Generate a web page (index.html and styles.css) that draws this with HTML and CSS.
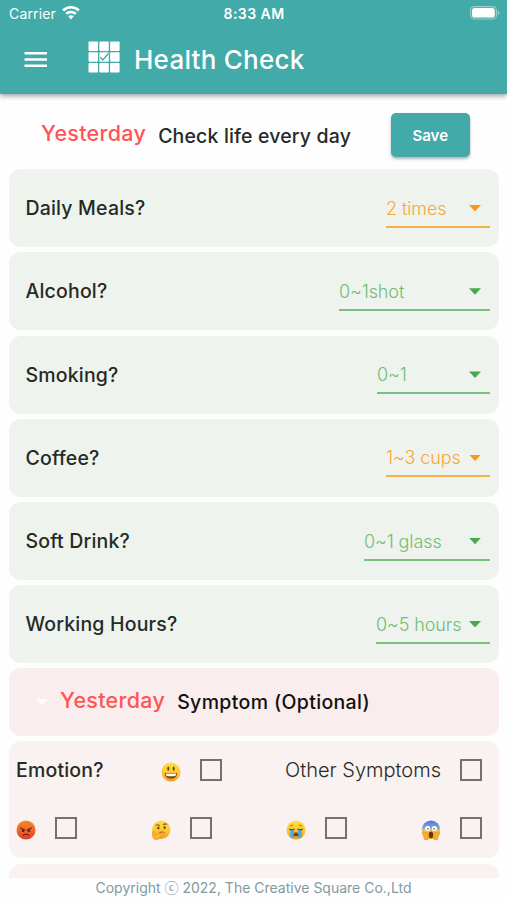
FILE: index.html
```html
<!DOCTYPE html>
<html lang="en">
<head>
<meta charset="utf-8">
<title>Health Check</title>
<link rel="stylesheet" href="styles.css">
</head>
<body>
<svg width="0" height="0" class="defs" aria-hidden="true">
  <defs>
    <linearGradient id="yellow" x1="0" y1="0" x2="0" y2="1"><stop offset="0" stop-color="#ffdf45"/><stop offset=".6" stop-color="#fcc32f"/><stop offset="1" stop-color="#f09a20"/></linearGradient>
    <linearGradient id="red" x1="0" y1="0" x2="0" y2="1"><stop offset="0" stop-color="#f68a25"/><stop offset=".55" stop-color="#ee6427"/><stop offset="1" stop-color="#dd3b28"/></linearGradient>
    <linearGradient id="scared" x1="0" y1="0" x2="0" y2="1"><stop offset="0" stop-color="#4c78d8"/><stop offset=".4" stop-color="#86a5dc"/><stop offset=".55" stop-color="#f6c649"/><stop offset="1" stop-color="#f3a51f"/></linearGradient>
  </defs>
</svg>
<div class="app">
  <header class="header">
    <div class="status">
      <div class="carrier"><span class="carrier-name">Carrier</span>
        <svg class="wifi" viewBox="0 0 18 14"><path d="M9 0C5.600 0 2.500 1.300.2 3.500L2 5.400A10.200 10.200 0 0 1 16 5.400l1.800-1.900A12.800 12.800 0 0 0 9 0Z"/><path d="M9 4.700c-2.200 0-4.200.9-5.700 2.200l1.800 1.900a5.800 5.800 0 0 1 7.800 0l1.800-1.900A8.500 8.500 0 0 0 9 4.700Z"/><path d="M9 9.200c-1.100 0-2 .4-2.700 1L9 13.400l2.700-3.200c-.7-.6-1.600-1-2.700-1Z"/></svg>
      </div>
      <span class="clock">8:33 AM</span>
      <svg class="battery" viewBox="0 0 30 14"><rect x=".6" y=".6" width="25.800" height="12.400" rx="3.800" fill="none" stroke="#fff" stroke-opacity=".45" stroke-width="1.100"/><rect x="2" y="2" width="22.800" height="9.600" rx="2.600" fill="#fff"/><path d="M27.800 4.600c2 1 2 3.600 0 4.600Z" fill="#fff" fill-opacity=".5"/></svg>
    </div>
    <div class="toolbar">
      <svg class="menu" viewBox="0 0 24 16"><path d="M.5 0h22.500v2.500H.5zM.5 6.300h22.500v2.500H.5zM.5 12.600h22.500v2.500H.5z"/></svg>
      <svg class="logo" viewBox="0 0 32 32"><g fill="#fff"><rect x=".5" y=".5" width="9.500" height="9.500" rx=".8"/><rect x="11.300" y=".5" width="9.500" height="9.500" rx=".8"/><rect x="22.100" y=".5" width="9.500" height="9.500" rx=".8"/><rect x=".5" y="11.300" width="9.500" height="9.500" rx=".8"/><rect x="11.300" y="11.300" width="9.500" height="9.500" rx=".8"/><rect x="22.100" y="11.300" width="9.500" height="9.500" rx=".8"/><rect x=".5" y="22.100" width="9.500" height="9.500" rx=".8"/><rect x="11.300" y="22.100" width="9.500" height="9.500" rx=".8"/><rect x="22.100" y="22.100" width="9.500" height="9.500" rx=".8"/></g><path d="m12.300 16.200 2.600 2.700 5.500-6.400" fill="none" stroke="#42aaa8" stroke-width="1.400"/></svg>
      <h1 class="title">Health Check</h1>
    </div>
  </header>

  <section class="intro">
    <span class="day">Yesterday</span>
    <h2 class="intro-title">Check life every day</h2>
    <button class="save">Save</button>
  </section>

  <main class="cards">
    <div class="card"><span class="label">Daily Meals?</span><div class="select orange w-meals"><span>2 times</span><i class="arrow"></i></div></div>
    <div class="card"><span class="label">Alcohol?</span><div class="select w-alcohol"><span>0~1shot</span><i class="arrow"></i></div></div>
    <div class="card"><span class="label">Smoking?</span><div class="select w-smoking"><span>0~1</span><i class="arrow"></i></div></div>
    <div class="card"><span class="label">Coffee?</span><div class="select orange w-meals"><span>1~3 cups</span><i class="arrow"></i></div></div>
    <div class="card"><span class="label">Soft Drink?</span><div class="select w-soft"><span>0~1 glass</span><i class="arrow"></i></div></div>
    <div class="card"><span class="label">Working Hours?</span><div class="select w-hours"><span>0~5 hours</span><i class="arrow"></i></div></div>

    <div class="symptom"><i class="arrow white"></i><span class="day">Yesterday</span><h2 class="symptom-title">Symptom (Optional)</h2></div>

    <div class="emotions">
      <div class="row first">
        <span class="label">Emotion?</span>
        <div class="option">
          <svg class="emoji" viewBox="0 0 20 20"><circle cx="10" cy="10" r="9.500" fill="url(#yellow)"/><ellipse cx="7.300" cy="6.700" rx="1" ry="2.100" fill="#68401a"/><ellipse cx="12.700" cy="6.700" rx="1" ry="2.100" fill="#68401a"/><path d="M3.800 11q6.200 1.500 12.400 0c-.3 7.600-12.100 7.600-12.400 0Z" fill="#7b461b"/><path d="M4.800 11.600q5.200 1 10.400 0l-.6 2.100q-4.600 1-9.200 0Z" fill="#fff"/></svg>
          <i class="box"></i>
        </div>
        <div class="other"><span class="other-label">Other Symptoms</span><i class="box"></i></div>
      </div>
      <div class="row second">
        <div class="option">
          <svg class="emoji" viewBox="0 0 20 20"><circle cx="10" cy="10" r="9.500" fill="url(#red)"/><path d="m4.500 8 4.300 2M15.500 8l-4.300 2" stroke="#6b2415" stroke-width="1.100" stroke-linecap="round"/><circle cx="7" cy="10.700" r="1.300" fill="#5b2015"/><circle cx="13" cy="10.700" r="1.300" fill="#5b2015"/><path d="M7.200 15.200q2.800-2 5.600 0" fill="none" stroke="#5b2015" stroke-width="1.100" stroke-linecap="round"/></svg>
          <i class="box"></i>
        </div>
        <div class="option">
          <svg class="emoji" viewBox="0 0 20 20"><circle cx="10.300" cy="9.700" r="9.200" fill="url(#yellow)"/><path d="M4.800 5.500q2-1.500 4 .1M12 4.700q2.200-1.600 4-.1" fill="none" stroke="#91551c" stroke-width="1.100"/><ellipse cx="7.400" cy="8" rx="1.100" ry="1.400" fill="#68401a"/><ellipse cx="13.600" cy="7.600" rx="1.100" ry="1.400" fill="#68401a"/><path d="M8.500 12.600q2.500-1.200 5 .1" fill="none" stroke="#91551c" stroke-width="1.200"/><path d="M2.800 11.400c-1.400 0-1.600 1.100-1.300 2.400l.3 3.200c.3 3.200 6.200 3.400 7.400.2l.4-1.700 3.100-1.700c.9-.7.3-1.800-.7-1.500l-5.800 1.800-2.100.6-.1-2.100c0-.7-.5-1.200-1.200-1.200Z" fill="#fbb62c" stroke="#df8820" stroke-width=".6"/></svg>
          <i class="box"></i>
        </div>
        <div class="option">
          <svg class="emoji" viewBox="0 0 20 20"><circle cx="10" cy="10" r="9.500" fill="url(#yellow)"/><path d="m4 6.200 3-1.300M16 6.200l-3-1.300" stroke="#ad6b20" stroke-width="1"/><path d="M4.200 9.500h3.700v8.600q-2 .8-3.700-1.200ZM12.100 9.500h3.700v7.400q-1.700 2-3.700 1.200Z" fill="#50abd9"/><path d="M3.200 9q2.500 1.200 5.300 0M11.500 9q2.800 1.200 5.300 0" fill="none" stroke="#684a20" stroke-width="1.300"/><path d="M7.400 16.200c.2-5.200 5-5.200 5.200 0Z" fill="#794019"/></svg>
          <i class="box"></i>
        </div>
        <div class="option">
          <svg class="emoji" viewBox="0 0 20 20"><circle cx="10" cy="9.800" r="9.300" fill="url(#scared)"/><circle cx="6.600" cy="8.500" r="2.500" fill="#fff"/><circle cx="13.400" cy="8.500" r="2.500" fill="#fff"/><circle cx="6.900" cy="8.700" r=".8" fill="#54331d"/><circle cx="13.100" cy="8.700" r=".8" fill="#54331d"/><ellipse cx="10" cy="14.800" rx="2.200" ry="3.400" fill="#6d3218"/><path d="M2.200 11.500c-1.500 1.400-.8 3.400.5 4.400l.6 3.600h3.500l.2-3.200c.8-1.500.3-3.500-.8-4l-.7 1.200-1-1.800-.8.800Zm15.600 0c1.500 1.400.8 3.400-.5 4.400l-.6 3.600h-3.500l-.2-3.200c-.8-1.500-.3-3.500.8-4l.7 1.200 1-1.800.8.800Z" fill="#f8b32b" stroke="#d98520" stroke-width=".5"/></svg>
          <i class="box"></i>
        </div>
      </div>
    </div>
    <div class="next-card"></div>
  </main>
  <footer class="footer"><span>Copyright ⓒ 2022, The Creative Square Co.,Ltd</span></footer>
</div>
</body>
</html>
```
FILE: styles.css
```css
* { box-sizing: border-box; }
body { margin: 0; background: #fefefe; color: #252a27; font-family: Inter, "Noto Sans CJK KR", sans-serif; }
h1, h2 { margin: 0; font-weight: 500; }
svg { display: block; flex: none; }
.defs { position: absolute; }
.app { width: 507px; height: 900px; display: flex; flex-direction: column; overflow: hidden; }
.header { height: 94px; flex: none; background: #42aaa8; color: #fff; box-shadow: 0 2px 5px rgba(0,0,0,.38); }
.status { height: 27px; display: grid; grid-template-columns: 1fr auto 1fr; align-items: center; padding: 0 7px 0 8px; font-size: 14px; }
.carrier { display: flex; align-items: center; gap: 6px; padding-left: 1px; }
.carrier-name { letter-spacing: .15px; }
.wifi { width: 18px; height: 14px; margin-top: -1px; fill: #fff; }
.clock { font-weight: 600; font-size: 14px; letter-spacing: .45px; }
.battery { width: 30px; height: 14px; margin-top: -1px; justify-self: end; }
.toolbar { height: 67px; display: flex; align-items: center; padding-left: 23.500px; }
.menu { width: 24px; height: 16px; margin-top: -1px; fill: #fff; }
.logo { width: 32px; height: 32px; margin: -7px 0 0 40.500px; }
.title { font-size: 26px; line-height: 32px; margin: -1px 0 0 14px; letter-spacing: .25px; white-space: nowrap; }
.intro { height: 75.300px; flex: none; display: flex; align-items: center; padding: 6px 37.500px 0 41px; white-space: nowrap; }
.day { color: #ff5555; font-size: 21.500px; font-weight: 500; line-height: 28px; margin-top: -4px; letter-spacing: .3px; }
.intro-title { font-size: 19.500px; margin: 2px 0 0 12px; letter-spacing: .15px; }
.save { margin-left: auto; width: 78.500px; height: 44px; border: 0; border-radius: 5px; background: #42aaa8; color: #fff; font: 600 15px Inter, sans-serif; box-shadow: 0 2px 3px rgba(0,0,0,.3); padding: 0; margin-top: 1px; }
.cards { flex: 1; min-height: 0; overflow: hidden; padding: 0 8px 0 8.500px; display: flex; flex-direction: column; gap: 5.200px; }
.card { height: 78px; flex: none; border-radius: 12px; background: #eff3ee; display: flex; justify-content: space-between; align-items: center; padding: 0 9px 0 17px; }
.label { font-size: 19.500px; font-weight: 500; letter-spacing: .18px; white-space: nowrap; }
.select { height: 40px; margin-top: -1px; color: #6fbd73; border-bottom: 2px solid #7bc17e; display: flex; align-items: center; justify-content: space-between; padding: 3px 9px 0 0; font-size: 18px; font-weight: 300; letter-spacing: -.1px; white-space: nowrap; }
.select .arrow { color: #45aa4b; }
.orange { color: #f8a638; border-color: #f8ae49; }
.orange .arrow { color: #fb961b; }
.w-meals { width: 104px; }
.w-alcohol { width: 151px; }
.w-smoking { width: 113px; }
.w-soft { width: 126px; }
.w-hours { width: 114px; }
.arrow { flex: none; width: 12px; height: 6.500px; background: currentColor; clip-path: polygon(0 0, 100% 0, 50% 100%); }
.symptom { height: 67.800px; flex: none; display: flex; align-items: center; border-radius: 12px; background: #f9eded; padding-left: 27.500px; }
.symptom .day { margin-top: -5px; }
.white { color: #fff; margin-right: 12px; }
.symptom-title { color: #111; font-size: 19.500px; margin-left: 12px; letter-spacing: .35px; }
.emotions { height: 117px; flex: none; border-radius: 12px; background: #faf1f1; padding: 0 17px 0 7.500px; }
.row { height: 58.500px; display: flex; align-items: center; justify-content: space-between; }
.first { display: grid; grid-template-columns: 145px 61px 1fr; height: 57.500px; }
.option { display: flex; align-items: center; gap: 19px; }
.emoji { width: 20px; height: 20px; margin-top: 3px; }
.box { flex: none; width: 22px; height: 22px; border: 2px solid #766f70; }
.other { display: flex; align-items: center; justify-content: flex-end; gap: 19px; }
.other-label { font-size: 20px; font-weight: 300; }
.next-card { height: 78px; flex: none; border-radius: 12px; background: #faf1f1; }
.footer { height: 22px; flex: none; display: flex; justify-content: center; align-items: center; padding-bottom: 4px; color: #829a9f; font-size: 14px; white-space: nowrap; }
```
